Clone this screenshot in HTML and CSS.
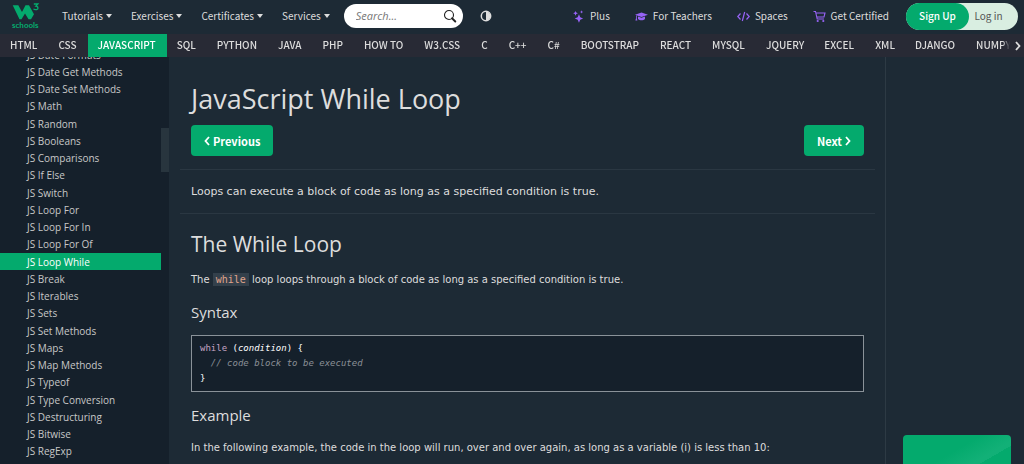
FILE: index.html
```
<!DOCTYPE html>
<html lang="en">
<head>
<meta charset="utf-8">
<title>JavaScript While Loop</title>
<link rel="stylesheet" href="styles.css">
</head>
<body>
<header class="topbar">
  <a class="logo" href="#" aria-label="W3Schools home">
    <svg class="logo-mark" viewBox="0 0 28 18" aria-hidden="true"><path d="M.7 2.300h5.600L10 9l3.500-6.700h3.500l5 9-3 4.900h-2.500L13 10.500 9.500 16.200H7.500Z" fill="#04aa6d"/><path d="M21.800 1h4l-2 2.200c3 .3 2.700 3.800-.2 3.500-1 0-1.700-.4-2-1" fill="none" stroke="#04aa6d" stroke-width="1.300"/></svg>
    <span class="logo-text">schools</span>
  </a>
  <nav class="menu">
    <button class="menu-item">Tutorials<span class="caret"></span></button>
    <button class="menu-item">Exercises<span class="caret"></span></button>
    <button class="menu-item">Certificates<span class="caret"></span></button>
    <button class="menu-item">Services<span class="caret"></span></button>
  </nav>
  <form class="search">
    <input class="search-input" type="text" placeholder="Search..." aria-label="Search">
    <button class="search-button" type="button" aria-label="Search"><svg class="icon" viewBox="0 0 14 14"><circle cx="6" cy="6" r="4.500" fill="none" stroke="#222" stroke-width="1.100"/><path d="M9 9.300 12.300 12.500" stroke="#222" stroke-width="1.900" stroke-linecap="round"/></svg></button>
  </form>
  <button class="contrast" aria-label="Toggle dark mode"><svg class="icon" viewBox="0 0 12 12"><circle cx="6" cy="6" r="4.700" fill="none" stroke="#ddd" stroke-width="1.500"/><path d="M6 1.500a4.500 4.500 0 0 1 0 9Z" fill="#ddd"/></svg></button>
  <nav class="links">
    <a class="link" href="#"><svg class="link-icon" viewBox="0 0 12 14"><path d="M6.500 4.500 7.900 7.700 11 9.100 7.900 10.500 6.500 13.700 5.100 10.500 2 9.100 5.100 7.700ZM2.800 1l.8 1.800 1.800.8-1.800.8L2.800 6.200 2 4.400.2 3.600 2 2.800ZM9.300.4l.5 1.200 1.200.5-1.200.5-.5 1.200-.5-1.200-1.200-.5 1.200-.5Z" fill="#9763f6"/></svg>Plus</a>
    <a class="link" href="#"><svg class="link-icon" viewBox="0 0 13 12"><path d="M6.500 2 13 4.300 6.500 6.500 0 4.300ZM3 6l3.500 1.300L10 6v2.500c-1.500 1.700-5.500 1.700-7 0ZM1 5l.8.300v2.500l.6 2.200H.4L1 7.800Z" fill="#9763f6"/></svg>For Teachers</a>
    <a class="link" href="#"><svg class="link-icon" viewBox="0 0 13 12"><path d="M3.500 3 .8 6l2.700 3M9.500 3l2.700 3-2.700 3M7.700 1.500 5.300 10.500" fill="none" stroke="#9763f6" stroke-width="1.200"/></svg>Spaces</a>
    <a class="link" href="#"><svg class="link-icon" viewBox="0 0 13 12"><path d="M.5 1h2l1.700 7.500H11M2.700 2.500h9.300L11 6.500H3.700" fill="none" stroke="#9763f6" stroke-width="1.100"/><circle cx="4.700" cy="10.500" r="1.100" fill="#9763f6"/><circle cx="10.300" cy="10.500" r="1.100" fill="#9763f6"/></svg>Get Certified</a>
  </nav>
  <div class="account"><button class="signup">Sign Up</button><button class="login">Log in</button></div>
</header>

<div class="subnav">
  <nav class="topics">
    <a class="topic" href="#">HTML</a><a class="topic" href="#">CSS</a><a class="topic topic-active" href="#">JAVASCRIPT</a><a class="topic" href="#">SQL</a><a class="topic" href="#">PYTHON</a><a class="topic" href="#">JAVA</a><a class="topic" href="#">PHP</a><a class="topic" href="#">HOW TO</a><a class="topic" href="#">W3.CSS</a><a class="topic" href="#">C</a><a class="topic" href="#">C++</a><a class="topic" href="#">C#</a><a class="topic" href="#">BOOTSTRAP</a><a class="topic" href="#">REACT</a><a class="topic" href="#">MYSQL</a><a class="topic topic-compact" href="#">JQUERY</a><a class="topic" href="#">EXCEL</a><a class="topic topic-compact" href="#">XML</a><a class="topic" href="#">DJANGO</a><a class="topic" href="#">NUMPY</a>
  </nav>
  <button class="scroll-right" aria-label="Scroll right"><svg class="chevron" viewBox="0 0 6 10"><path d="m1 1 3.500 4L1 9" fill="none" stroke="currentColor" stroke-width="1.800"/></svg></button>
</div>

<div class="layout">
  <aside class="sidebar">
    <nav class="lessons">
      <a class="lesson" href="#">JS Date Formats</a>
      <a class="lesson" href="#">JS Date Get Methods</a>
      <a class="lesson" href="#">JS Date Set Methods</a>
      <a class="lesson" href="#">JS Math</a>
      <a class="lesson" href="#">JS Random</a>
      <a class="lesson" href="#">JS Booleans</a>
      <a class="lesson" href="#">JS Comparisons</a>
      <a class="lesson" href="#">JS If Else</a>
      <a class="lesson" href="#">JS Switch</a>
      <a class="lesson" href="#">JS Loop For</a>
      <a class="lesson" href="#">JS Loop For In</a>
      <a class="lesson" href="#">JS Loop For Of</a>
      <a class="lesson lesson-active" href="#">JS Loop While</a>
      <a class="lesson" href="#">JS Break</a>
      <a class="lesson" href="#">JS Iterables</a>
      <a class="lesson" href="#">JS Sets</a>
      <a class="lesson" href="#">JS Set Methods</a>
      <a class="lesson" href="#">JS Maps</a>
      <a class="lesson" href="#">JS Map Methods</a>
      <a class="lesson" href="#">JS Typeof</a>
      <a class="lesson" href="#">JS Type Conversion</a>
      <a class="lesson" href="#">JS Destructuring</a>
      <a class="lesson" href="#">JS Bitwise</a>
      <a class="lesson" href="#">JS RegExp</a>
    </nav>
    <div class="scrollbar"><div class="thumb"></div></div>
  </aside>
  <main class="content">
    <h1 class="title">JavaScript While Loop</h1>
    <div class="pager">
      <a class="page-button" href="#"><svg class="chevron" viewBox="0 0 6 10"><path d="M5 1 1.500 5 5 9" fill="none" stroke="currentColor" stroke-width="1.800"/></svg>Previous</a>
      <a class="page-button" href="#">Next<svg class="chevron" viewBox="0 0 6 10"><path d="m1 1 3.500 4L1 9" fill="none" stroke="currentColor" stroke-width="1.800"/></svg></a>
    </div>
    <hr class="rule">
    <p class="intro">Loops can execute a block of code as long as a specified condition is true.</p>
    <hr class="rule">
    <h2 class="heading">The While Loop</h2>
    <p class="text">The <code class="inline-code">while</code> loop loops through a block of code as long as a specified condition is true.</p>
    <h3 class="subheading">Syntax</h3>
    <pre class="code"><span class="keyword">while</span> (<em>condition</em>) {
  <em class="comment">// code block to be executed</em>
}</pre>
    <h3 class="subheading">Example</h3>
    <p class="text">In the following example, the code in the loop will run, over and over again, as long as a variable (i) is less than 10:</p>
  </main>
  <aside class="right"><div class="promo"></div></aside>
</div>
</body>
</html>
```
FILE: styles.css
```
* { box-sizing: border-box; }
body {
  margin: 0;
  height: 100vh;
  display: flex;
  flex-direction: column;
  overflow: hidden;
  background: #1d2a35;
  color: #ddd;
  font-family: "DejaVu Sans", Verdana, sans-serif;
  font-size: 10px;
}
a { color: inherit; text-decoration: none; }
button { border: 0; padding: 0; background: none; color: inherit; font: inherit; }
svg { display: block; flex: none; }

.topbar {
  display: flex;
  align-items: center;
  flex: none;
  height: 34px;
  padding: 0 6px 2px 12px;
  font-family: "Noto Sans CJK SC", "Source Sans Pro", sans-serif;
  font-size: 10px;
  line-height: 16px;
}
.logo { width: 28px; color: #04aa6d; }
.logo-mark { width: 28px; height: 18px; }
.logo-text { display: block; font: bold 8px/8px Lato, sans-serif; }
.menu { display: flex; gap: 19px; margin-left: 22px; }
.menu-item { display: flex; align-items: center; gap: 3px; }
.caret { border: 3px solid transparent; border-top: 4px solid #ddd; border-bottom: 0; }
.search {
  display: flex;
  align-items: center;
  width: 119px;
  height: 24px;
  margin: 0 17px 0 14px;
  padding: 0 6px 0 12px;
  border-radius: 12px;
  background: #fff;
}
.search-input { flex: 1; min-width: 0; border: 0; padding: 0; background: none; font: italic 11px/16px "Open Sans", sans-serif; }
.search-input::placeholder { color: #777; }
.icon { width: 14px; height: 14px; }
.contrast .icon { width: 12px; height: 12px; }
.links { display: flex; gap: 25px; margin-left: auto; }
.link { display: flex; align-items: center; gap: 5px; }
.link-icon { width: 13px; height: 13px; }
.account { display: flex; height: 27px; margin-left: 17px; border-radius: 14px; background: #d9eee1; }
.signup { width: 63px; border-radius: 14px; background: #04aa6d; color: #fff; font-weight: 500; }
.login { width: 49px; padding-right: 10px; color: #555; }

.subnav {
  display: flex;
  flex: none;
  height: 23px;
  background: #282a35;
  font-family: "Noto Sans CJK SC", "Source Sans Pro", sans-serif;
  font-size: 10px;
  line-height: 22px;
}
.topics { display: flex; flex: 1; min-width: 0; overflow: hidden; mask-image: linear-gradient(to left, transparent, #000 8px); }
.topic { flex: none; padding: 0 11px 0 10px; font-weight: 500; }
.topic-compact { padding: 0 10px; }
.topic-active { background: #04aa6d; color: #fff; }
.scroll-right { display: flex; align-items: center; width: 14px; padding-left: 5px; }
.chevron { width: 6px; height: 10px; }

.layout { display: flex; flex: 1; min-height: 0; }
.sidebar { display: flex; width: 169px; overflow: hidden; background: #15202b; color: #c8c8c8; font-family: "Open Sans", "Segoe UI", sans-serif; }
.lessons { display: grid; flex: 1; grid-auto-rows: 1fr; margin: -11px 0 4px; }
.lesson { display: flex; align-items: center; padding-left: 27px; line-height: 14px; }
.lesson-active { background: #04aa6d; color: #fff; }
.scrollbar { width: 8px; padding-top: 71px; }
.thumb { height: 44px; background: #28353e; }

.content { flex: 1; min-width: 0; padding: 24px 10px 0 11px; }
.content > * { margin-left: 11px; margin-right: 11px; }
.content > .rule { height: 1px; margin: 0; border: 0; background: #2a3742; }
.title, .heading, .subheading { margin-top: 0; margin-bottom: 0; font-family: "Open Sans", "Segoe UI", sans-serif; font-weight: 400; }
.title { font-size: 27px; line-height: 36px; }
.heading { padding-top: 17px; font-size: 21px; line-height: 26px; }
.subheading { font-size: 15px; line-height: 20px; }
.pager { display: flex; justify-content: space-between; margin-top: 8px; margin-bottom: 13px; }
.page-button { display: flex; align-items: center; gap: 3px; height: 31px; padding: 0 13px; border-radius: 4px; background: #04aa6d; color: #fff; font: bold 11px/16px "Noto Sans CJK SC", sans-serif; }
.intro { margin-top: 14px; margin-bottom: 13px; font-size: 11px; line-height: 16px; }
.text { margin-top: 15px; margin-bottom: 14px; line-height: 16px; }
.inline-code { padding: 1px 3px; background: #33404b; color: #e0a58c; font: 10px/12px "DejaVu Sans Mono", monospace; }
.code { margin-top: 13px; margin-bottom: 13px; padding: 5px 8px; border: 1px solid #8a9299; background: #15202b; color: #fff; font: 9px/15px "DejaVu Sans Mono", monospace; }
.keyword { color: #c5a5c5; }
.comment { color: #8a8f96; }

.right { display: flex; align-items: flex-end; width: 139px; padding: 0 13px 0 17px; border-left: 1px solid #2d3a44; }
.promo { flex: 1; height: 29px; border-radius: 4px 4px 0 0; background: linear-gradient(150deg, #04aa6d 50%, #12b077 75%, #12b077 80%, #04aa6d 80%); }
```
